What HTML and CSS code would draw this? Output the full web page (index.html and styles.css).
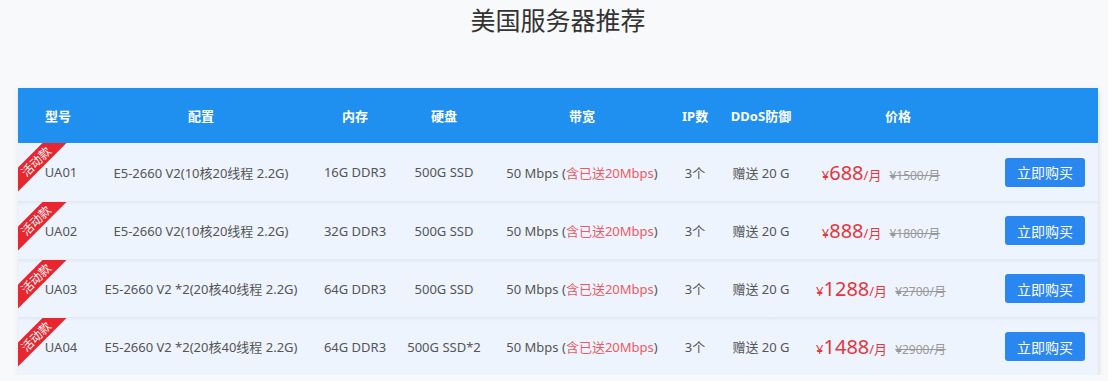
FILE: index.html
```html
<!DOCTYPE html>
<html lang="zh-CN">
<head>
<meta charset="utf-8">
<title>美国服务器推荐</title>
<link rel="stylesheet" href="styles.css">
</head>
<body>
<div class="wrap">
  <h1 class="title">美国服务器推荐</h1>
  <div class="table">
    <div class="row head">
      <div class="cell">型号</div>
      <div class="cell">配置</div>
      <div class="cell">内存</div>
      <div class="cell">硬盘</div>
      <div class="cell">带宽</div>
      <div class="cell">IP数</div>
      <div class="cell">DDoS防御</div>
      <div class="cell price-head">价格</div>
      <div class="cell"></div>
    </div>
    <div class="row item">
      <div class="ribbon">活动款</div>
      <div class="cell model">UA01</div>
      <div class="cell">E5-2660 V2(10核20线程 2.2G)</div>
      <div class="cell">16G DDR3</div>
      <div class="cell">500G SSD</div>
      <div class="cell">50 Mbps (<span class="red">含已送20Mbps</span>)</div>
      <div class="cell">3个</div>
      <div class="cell">赠送 20 G</div>
      <div class="cell price"><span class="cur">¥</span><span class="num">688</span><span class="unit">/月</span><span class="old">¥1500/月</span></div>
      <div class="cell act"><button class="buy">立即购买</button></div>
    </div>
    <div class="row item">
      <div class="ribbon">活动款</div>
      <div class="cell model">UA02</div>
      <div class="cell">E5-2660 V2(10核20线程 2.2G)</div>
      <div class="cell">32G DDR3</div>
      <div class="cell">500G SSD</div>
      <div class="cell">50 Mbps (<span class="red">含已送20Mbps</span>)</div>
      <div class="cell">3个</div>
      <div class="cell">赠送 20 G</div>
      <div class="cell price"><span class="cur">¥</span><span class="num">888</span><span class="unit">/月</span><span class="old">¥1800/月</span></div>
      <div class="cell act"><button class="buy">立即购买</button></div>
    </div>
    <div class="row item">
      <div class="ribbon">活动款</div>
      <div class="cell model">UA03</div>
      <div class="cell">E5-2660 V2 *2(20核40线程 2.2G)</div>
      <div class="cell">64G DDR3</div>
      <div class="cell">500G SSD</div>
      <div class="cell">50 Mbps (<span class="red">含已送20Mbps</span>)</div>
      <div class="cell">3个</div>
      <div class="cell">赠送 20 G</div>
      <div class="cell price"><span class="cur">¥</span><span class="num">1288</span><span class="unit">/月</span><span class="old">¥2700/月</span></div>
      <div class="cell act"><button class="buy">立即购买</button></div>
    </div>
    <div class="row item">
      <div class="ribbon">活动款</div>
      <div class="cell model">UA04</div>
      <div class="cell">E5-2660 V2 *2(20核40线程 2.2G)</div>
      <div class="cell">64G DDR3</div>
      <div class="cell">500G SSD*2</div>
      <div class="cell">50 Mbps (<span class="red">含已送20Mbps</span>)</div>
      <div class="cell">3个</div>
      <div class="cell">赠送 20 G</div>
      <div class="cell price"><span class="cur">¥</span><span class="num">1488</span><span class="unit">/月</span><span class="old">¥2900/月</span></div>
      <div class="cell act"><button class="buy">立即购买</button></div>
    </div>
  </div>
</div>
</body>
</html>
```
FILE: styles.css
```css
html, body {
  margin: 0;
  padding: 0;
  background: #f8f9fb;
}
body {
  font-family: "Noto Sans", "Noto Sans CJK SC", sans-serif;
  color: #555;
  font-size: 13px;
}
.wrap {
  width: 1080px;
  margin-left: 18px;
}
.title {
  margin: 0 0 48px;
  height: 40px;
  line-height: 40px;
  font-size: 25px;
  font-weight: 400;
  color: #333;
  text-align: center;
}
.table {
  box-shadow: 1px 2px 5px rgba(0, 0, 0, 0.12);
}
.row {
  display: grid;
  grid-template-columns: 80px 206px 102px 76px 200px 26px 106px 134px 150px;
  align-items: center;
  position: relative;
  overflow: hidden;
}
.cell {
  text-align: center;
  white-space: nowrap;
}
.head {
  height: 55px;
  background: #1f8ff0;
  color: #fff;
  font-weight: 700;
  font-size: 13px;
}
.price-head {
  padding-left: 34px;
}
.item {
  height: 58px;
  box-sizing: border-box;
  background: #edf4fd;
}
.item + .item {
  border-top: 1px solid #e4e9f1;
  box-shadow: inset 0 2px 2px rgba(0, 0, 0, 0.03);
}
.model {
  padding-left: 6px;
}
.red {
  color: #ec5a63;
}
.ribbon {
  position: absolute;
  left: -18px;
  top: 10px;
  width: 72px;
  height: 17px;
  line-height: 17px;
  background: #e7262f;
  color: #fff;
  font-size: 12px;
  text-align: center;
  transform: rotate(-45deg);
  z-index: 1;
}
.price {
  color: #e4363e;
}
.cur {
  font-size: 13px;
}
.num {
  font-size: 20px;
}
.unit {
  font-size: 13px;
}
.old {
  margin-left: 8px;
  font-size: 12px;
  color: #999;
  text-decoration: line-through;
}
.act {
  display: flex;
  justify-content: flex-end;
  padding-right: 13px;
}
.buy {
  width: 80px;
  height: 29px;
  border: 0;
  border-radius: 3px;
  background: #2b87f0;
  color: #fff;
  font-family: "Noto Sans CJK SC", sans-serif;
  font-size: 14px;
  padding: 0;
  cursor: pointer;
}
```
